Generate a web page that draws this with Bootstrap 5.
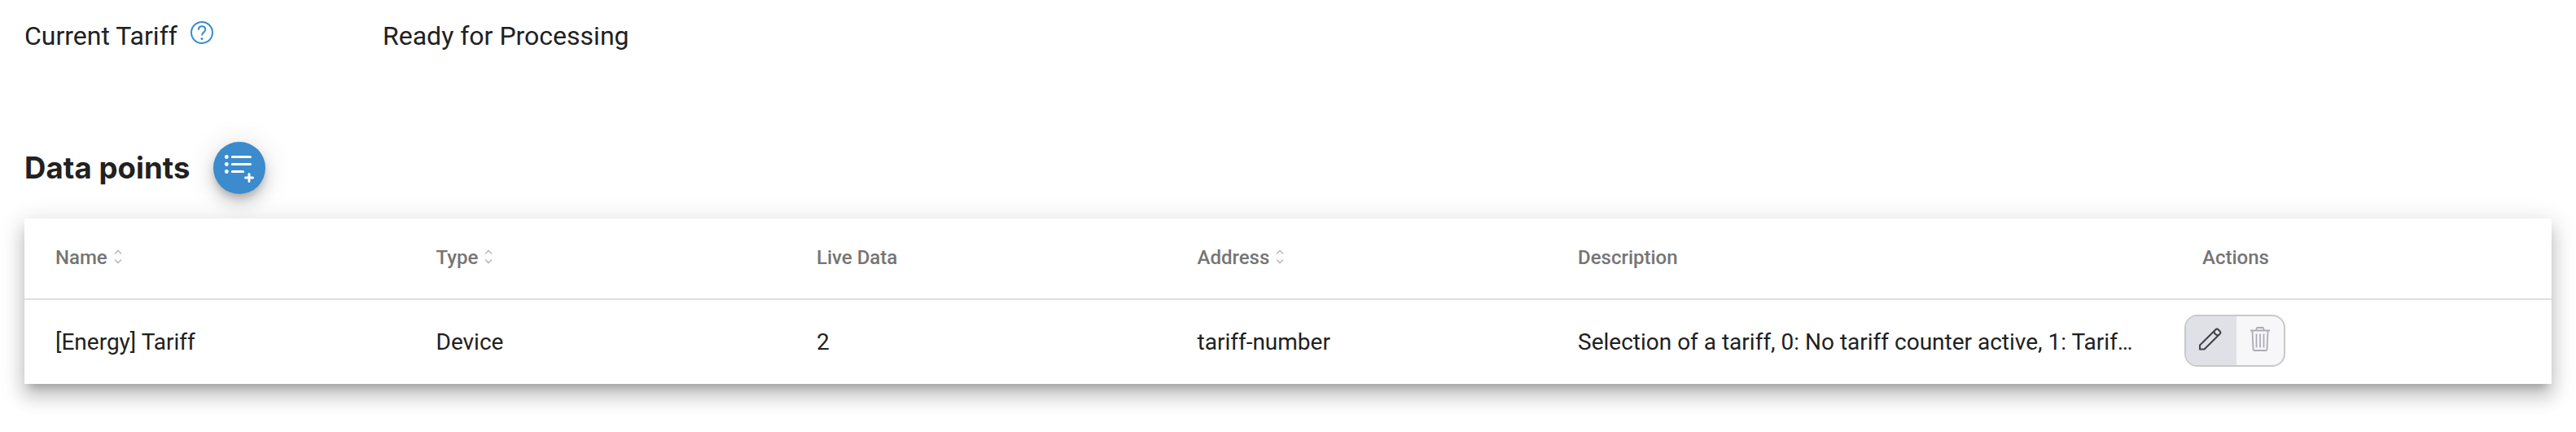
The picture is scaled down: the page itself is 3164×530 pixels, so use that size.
<!DOCTYPE html>
<html lang="en">
<head>
<meta charset="utf-8">
<title>Data points</title>
<link href="https://cdn.jsdelivr.net/npm/bootstrap@5.3.0/dist/css/bootstrap.min.css" rel="stylesheet">
<style>
body{font-family:Roboto,"Liberation Sans",sans-serif;color:#212121;background:#fff;line-height:1}
.page{padding:0 30px;height:530px}
.status-line{height:88px;font-size:32px;line-height:88px}
.status-label{width:440px}
.help-icon{width:28px;height:28px;margin:26px 0 0 16px}
.section-head{height:64px;margin-top:86px}
.section-head h2{font-family:Inter,Roboto,sans-serif;font-size:36.500px;font-weight:700;letter-spacing:.1px;line-height:64px;width:232px}
.fab{width:64px;height:64px;background:#3b8bcd;box-shadow:0 6px 10px -2px rgba(0,0,0,.2),0 12px 20px 0 rgba(0,0,0,.14),0 2px 36px 0 rgba(0,0,0,.12)}
.data-card{margin-top:30px;height:203px;border:0;border-radius:0;box-shadow:0 10px 10px -6px rgba(0,0,0,.2),0 16px 20px 2px rgba(0,0,0,.14),0 6px 28px 4px rgba(0,0,0,.12)}
.grid-row{display:grid;grid-template-columns:repeat(4,467.5px) 745px 1fr;padding-left:38px;align-items:center}
.grid-head{height:100px;padding-bottom:2px;border-bottom:2px solid #e0e0e0;font-size:24px;font-weight:500;color:#757575}
.grid-head .actions-title{padding-left:22px}
.grid-body{height:103px;font-size:28px}
.sorter{width:10px;height:18px;margin:-2px 0 0 8px}
.descr{width:683px;line-height:36px}
.tools{width:124px;height:64px;margin-top:-3px;border:2px solid #c9c9c9;border-radius:16px;overflow:hidden;background:#f7f7fa}
.tools .btn{border:0;border-radius:0;padding:0 0 4px;line-height:0;width:58px}
.tools .edit-btn{background:#e0e1e6;width:62px;padding-right:2px}
</style>
</head>
<body>
<main class="page">
  <div class="status-line d-flex">
    <div class="status-label d-flex"><span>Current Tariff</span>
      <svg class="help-icon" viewBox="0 0 28 28" fill="none" stroke="#3b8bcd" stroke-width="2"><circle cx="14" cy="14" r="13"/><path d="M9.800 10.800c0-2.700 1.800-4.500 4.300-4.500s4.200 1.600 4.200 3.900c0 3.400-4.300 3.500-4.300 7.300"/><circle cx="14" cy="21.400" r="1.500" fill="#3b8bcd" stroke="none"/></svg>
    </div>
    <span>Ready for Processing</span>
  </div>
  <div class="section-head d-flex align-items-center">
    <h2 class="mb-0">Data points</h2>
    <button class="fab btn rounded-circle p-0 border-0" aria-label="Add data point">
      <svg class="d-block" width="64" height="64" viewBox="0 0 64 64" fill="none" stroke="#fff" stroke-width="3" stroke-linecap="round"><path d="M23.300 18.500h22.200M23.300 27.500h22.200M23.300 36.500h13.200M39.500 44h9M44 39.500v9"/><g fill="#fff" stroke="none"><circle cx="16.300" cy="18.500" r="2.400"/><circle cx="16.300" cy="27.500" r="2.400"/><circle cx="16.300" cy="36.500" r="2.400"/></g></svg>
    </button>
  </div>
  <div class="data-card card">
    <div class="grid-row grid-head">
      <div class="d-flex align-items-center"><span>Name</span><svg class="sorter" viewBox="0 0 10 18" fill="none" stroke="#bdbdbd" stroke-width="1.700"><path d="M1 5.500l4-4 4 4M1 12.500l4 4 4-4"/></svg></div>
      <div class="d-flex align-items-center"><span>Type</span><svg class="sorter" viewBox="0 0 10 18" fill="none" stroke="#bdbdbd" stroke-width="1.700"><path d="M1 5.500l4-4 4 4M1 12.500l4 4 4-4"/></svg></div>
      <div>Live Data</div>
      <div class="d-flex align-items-center"><span>Address</span><svg class="sorter" viewBox="0 0 10 18" fill="none" stroke="#bdbdbd" stroke-width="1.700"><path d="M1 5.500l4-4 4 4M1 12.500l4 4 4-4"/></svg></div>
      <div>Description</div>
      <div class="actions-title">Actions</div>
    </div>
    <div class="grid-row grid-body">
      <div>[Energy] Tariff</div>
      <div>Device</div>
      <div>2</div>
      <div>tariff-number</div>
      <div class="descr">Selection of a tariff, 0: No tariff counter active, 1: Tarif…</div>
      <div class="tools d-flex">
        <button class="btn edit-btn" aria-label="Edit"><svg width="28" height="28" viewBox="0 0 28 28" fill="none" stroke="#3f4045" stroke-width="2" stroke-linejoin="round"><path d="M1 26.500v-5L20.500 2.300q1.500-1.400 3 0l2.200 2.200q1.400 1.500 0 3L6.500 26.500zM18.500 4.300c.3 3 2 4.700 5 5"/></svg></button>
        <button class="btn" aria-label="Delete"><svg width="24" height="30" viewBox="0 0 24 30" fill="none" stroke="#acacb4" stroke-width="1.800" stroke-linejoin="round"><path d="M0 4.500h24M7.500 4V2.500q0-1.500 1.500-1.500h6q1.500 0 1.500 1.500V4M2.500 5l1 22.500q.1 1.500 1.500 1.500h14q1.400 0 1.500-1.500l1-22.500M7.500 8.500v17M12 8.500v17M16.500 8.500v17"/></svg></button>
      </div>
    </div>
  </div>
</main>
<script src="https://cdn.jsdelivr.net/npm/bootstrap@5.3.0/dist/js/bootstrap.bundle.min.js"></script>
</body>
</html>
